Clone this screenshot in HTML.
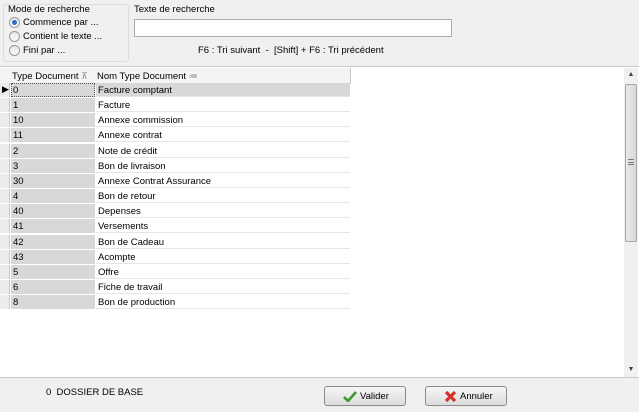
<!DOCTYPE html>
<html><head><meta charset="utf-8"><style>
*{box-sizing:border-box;margin:0;padding:0}
body{width:639px;height:412px;overflow:hidden;background:#f0f0f0;font-family:"Liberation Sans",sans-serif;font-size:9.5px;color:#000;position:relative}
.abs{position:absolute}
.grp{left:3px;top:4px;width:126px;height:58px;border:1px solid #dcdcdc;border-radius:3px}
.radio{position:absolute;left:9px;width:11px;height:11px;border:1px solid #9a9a9a;border-radius:50%;background:linear-gradient(#e8e8e8,#fafafa)}
.radio.on::after{content:"";position:absolute;left:2px;top:2px;width:5px;height:5px;border-radius:50%;background:#2a6fc4}
.lbl{position:absolute;white-space:nowrap;font-size:9.5px}
.grid{left:0;top:66px;width:639px;height:311px;background:#fff;border-top:1px solid #c8c8c8}
.hdr{position:absolute;top:1px;height:16px;background:#f4f4f4;border-right:1px solid #c8c8c8;border-bottom:1px solid #c8c8c8;font-size:9.5px;padding:3px 0 0 2px;white-space:nowrap}
.row{position:absolute;left:0;height:15px;width:350px}
.ind{position:absolute;left:0;top:0;width:10px;height:14px;background:#ececec;border-right:1px solid #c8c8c8}
.c1{position:absolute;left:11px;top:0;width:84px;height:14px;background:#d8d8d8;padding:2px 0 0 2px;font-size:9.5px}
.c2{position:absolute;left:96px;top:0;width:254px;height:14px;background:#fff;border-bottom:1px solid #e6e6e6;padding:2px 0 0 2px;font-size:9.5px}
.btn{position:absolute;top:386px;width:82px;height:20px;border:1px solid #8a8a8a;border-radius:3px;background:linear-gradient(#f6f6f6,#dcdcdc);font-size:9.5px}
</style></head><body>
<div class="abs grp"></div>
<div class="lbl" style="left:8px;top:4px">Mode de recherche</div>
<div class="radio on" style="top:17px"></div><div class="lbl" style="left:23px;top:17px">Commence par ...</div>
<div class="radio" style="top:31px"></div><div class="lbl" style="left:23px;top:31px">Contient le texte ...</div>
<div class="radio" style="top:45px"></div><div class="lbl" style="left:23px;top:45px">Fini par ...</div>
<div class="lbl" style="left:134px;top:4px">Texte de recherche</div>
<div class="abs" style="left:134px;top:19px;width:318px;height:18px;background:#fff;border:1px solid #ababab"></div>
<div class="lbl" style="left:198px;top:45px">F6 : Tri suivant &nbsp;- &nbsp;[Shift] + F6 : Tri précédent</div>

<div class="abs grid">
<div class="hdr" style="left:0;width:11px;padding:0"></div>
<div class="hdr" style="left:10px;width:86px">Type Document <span style="color:#888;font-size:9px">⊼</span></div>
<div class="hdr" style="left:95px;width:256px">Nom Type Document <span style="color:#888;font-size:9px">≔</span></div>
<div class="abs" style="left:624px;top:1px;width:14px;height:309px;background:#f0f0f0"></div>
<div class="abs" style="left:624px;top:1px;width:14px;height:14px;font-size:7px;color:#444;text-align:center;line-height:14px">▲</div>
<div class="abs" style="left:625px;top:17px;width:12px;height:158px;border:1px solid #a8a8a8;border-radius:2px;background:linear-gradient(90deg,#e8e8e8,#d8d8d8)"></div>
<div class="abs" style="left:628px;top:92px;width:6px;height:6px;border-top:1px solid #777;border-bottom:1px solid #777"><div style="margin-top:2px;border-top:1px solid #777"></div></div>
<div class="abs" style="left:624px;top:296px;width:14px;height:14px;font-size:7px;color:#444;text-align:center;line-height:14px">▼</div>
</div>

<div id="rows"></div>
<script>
var d=[["0","Facture comptant"],["1","Facture"],["10","Annexe commission"],["11","Annexe contrat"],["2","Note de crédit"],["3","Bon de livraison"],["30","Annexe Contrat Assurance"],["4","Bon de retour"],["40","Depenses"],["41","Versements"],["42","Bon de Cadeau"],["43","Acompte"],["5","Offre"],["6","Fiche de travail"],["8","Bon de production"]];
var h="";
d.forEach(function(r,i){var t=83+i*15.15;
h+='<div class="row" style="top:'+t.toFixed(1)+'px"><div class="ind">'+(i==0?'<span style="position:absolute;left:2px;top:1px;font-size:9px">▶</span>':'')+'</div><div class="c1" style="'+(i==0?'outline:1px dotted #555;outline-offset:-1px':'')+'">'+r[0]+'</div><div class="c2" style="'+(i==0?'background:#d8d8d8':'')+'">'+r[1]+'</div></div>';});
document.getElementById("rows").innerHTML=h;
</script>

<div class="abs" style="left:0;top:377px;width:639px;height:1px;background:#c8c8c8"></div>
<div class="lbl" style="left:46px;top:387px">0 &nbsp;DOSSIER DE BASE</div>
<div class="btn" style="left:324px"><svg class="abs" style="left:18px;top:4px" width="14" height="11"><path d="M1 6 L5 10 L13 1" stroke="#3a9a2a" stroke-width="2.6" fill="none"/></svg><span class="abs" style="left:35px;top:4px">Valider</span></div>
<div class="btn" style="left:425px"><svg class="abs" style="left:18px;top:3px" width="13" height="13"><path d="M2 2 L11 11 M11 2 L2 11" stroke="#d8302a" stroke-width="3.2"/></svg><span class="abs" style="left:34px;top:4px">Annuler</span></div>
</body></html>
